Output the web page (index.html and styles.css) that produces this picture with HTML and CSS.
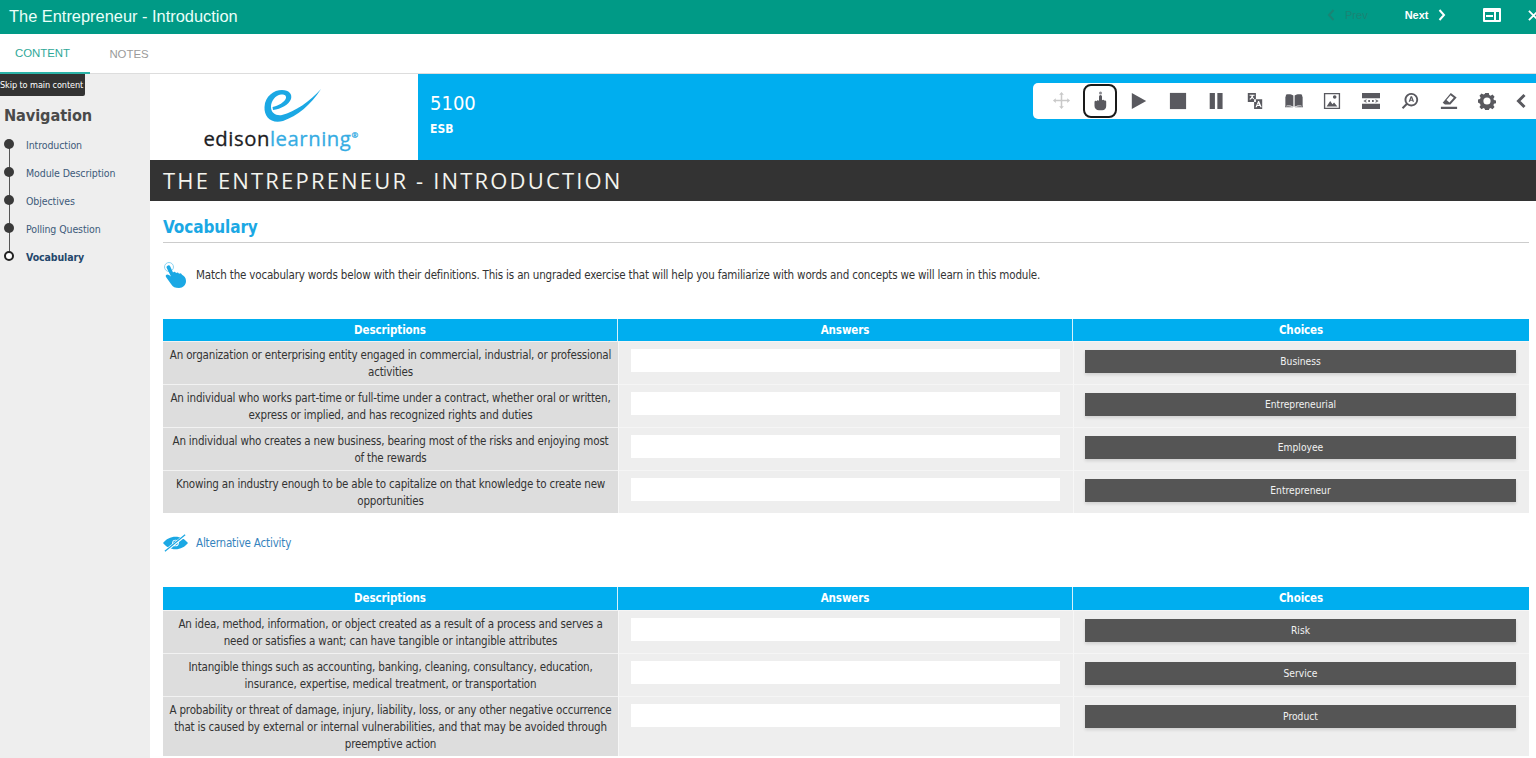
FILE: index.html
```html
<!DOCTYPE html>
<html lang="en">
<head>
<meta charset="utf-8">
<title>The Entrepreneur - Introduction</title>
<link rel="stylesheet" href="styles.css">
</head>
<body>
<header class="topbar">
  <h1 class="topbar-title">The Entrepreneur - Introduction</h1>
  <nav class="pager">
    <a class="pager-link is-disabled"><svg class="chev" viewBox="0 0 8 12"><path d="M6.500 1 2 6l4.500 5"/></svg><span class="prev-label">Prev</span></a>
    <a class="pager-link is-next"><span>Next</span><svg class="chev" viewBox="0 0 8 12"><path d="M1.500 1 6 6l-4.500 5"/></svg></a>
    <svg class="win-icon" viewBox="0 0 18 14"><path fill-rule="evenodd" d="M1 0h16a1 1 0 0 1 1 1v12a1 1 0 0 1-1 1H1a1 1 0 0 1-1-1V1a1 1 0 0 1 1-1Zm1 4v8h9V4Zm11 0v8h3V4ZM3 7h7v2H3Z"/></svg>
    <svg class="close-icon" viewBox="0 0 12 12"><path d="M1 1l10 10M11 1 1 11"/></svg>
  </nav>
</header>
<div class="tabs">
  <a class="tab is-active">CONTENT</a>
  <a class="tab">NOTES</a>
</div>
<div class="main">
  <aside class="sidebar">
    <a class="skip">Skip to main content</a>
    <h2 class="nav-title">Navigation</h2>
    <ul class="nav-list">
      <li class="nav-item">Introduction</li>
      <li class="nav-item">Module Description</li>
      <li class="nav-item">Objectives</li>
      <li class="nav-item">Polling Question</li>
      <li class="nav-item is-current">Vocabulary</li>
    </ul>
  </aside>
  <main class="content">
    <section class="hero">
      <div class="logo">
        <svg class="logo-mark" viewBox="0 0 75 42"><path fill="#1ba8e4" d="M66 4C56 20 42 31 28 36 16 39 9 32 9.500 22 10 11 19 5 27 5c7 0 10.500 4 9 9-2 5.500-10 10-18 11l-.5-3c5.500-1 12.500-5 13.500-9 .5-3-2.500-4-5-3.500-6 1-10 6.500-10 12.500 0 6 5 9 11 8C40 27 55 16 66 4Z"/></svg>
        <div class="logo-text">edison<span class="logo-accent">learning</span><sup class="logo-reg">®</sup></div>
      </div>
      <div class="hero-band">
        <div class="course">
          <div class="course-num">5100</div>
          <div class="course-sub">ESB</div>
        </div>
        <div class="toolbar">
          <svg class="tool is-muted" viewBox="0 0 20 20"><path d="M10 1 7.500 4h1.700v5.200H4V7.500L1 10l3 2.500v-1.700h5.200V16H7.500l2.500 3 2.500-3h-1.700v-5.200H16v1.700l3-2.500-3-2.500v1.700h-5.200V4h1.700Z"/></svg>
          <span class="tool-focus"><svg class="tool tool-hand" viewBox="3 0 14 20"><circle cx="10.500" cy="2" r="1.500" fill="#8a8a8f"/><path d="M9 5.500a1.500 1.500 0 0 1 3 0v3.800a1.300 1.300 0 0 1 2.200.3 1.300 1.300 0 0 1 2 1V15c0 2.500-1.500 4.300-4 4.300H9c-2.500 0-4.500-1.700-4.500-4.300v-4a1.200 1.200 0 0 1 2.200-.7A1.200 1.200 0 0 1 9 10Z"/></svg></span>
          <svg class="tool" viewBox="0 0 20 20"><path d="M2 1l16 9-16 9Z"/></svg>
          <svg class="tool" viewBox="0 0 20 20"><path d="M1 1h18v18H1Z"/></svg>
          <svg class="tool" viewBox="0 0 20 20"><path d="M3 1h5.800v18H3ZM11.500 1h5.800v18h-5.800Z"/></svg>
          <svg class="tool" viewBox="0 0 20 20"><path fill-rule="evenodd" d="M2 1h9v10H2Zm2 2v1.200h2.200C6 6 5 7 3.800 7.700l.7 1c1-.6 1.800-1.300 2.400-2.100.4.500 1 1 1.600 1.400l.5-1C8.500 6.600 8 6.100 7.500 5.500c.3-.4.500-.9.600-1.300H9.500V3ZM9 8h9v11H9Zm4.500 2-3 7H12l.6-1.500h2.800L16 17h1.500l-3-7Zm0 2.500.8 2h-1.600Z"/></svg>
          <svg class="tool" viewBox="0 0 20 20"><path d="M1 3c3-.8 6-.6 8.300 1v12.500C7 15 4 14.800 1 15.500ZM10.700 4c2.300-1.600 5.300-1.800 8.300-1v12.500c-3-.7-6-.5-8.300 1ZM0 5h.6v11.200c3-.6 6-.4 8.500.8H0ZM20 5h-.6v11.200c-3-.6-6-.4-8.500.8H20Z"/></svg>
          <svg class="tool" viewBox="0 0 20 20"><path fill-rule="evenodd" d="M1 1h18v18H1Zm1.500 1.500v15h15v-15Zm10.500 1a2 2 0 1 1 0 4 2 2 0 0 1 0-4ZM4 16l4-6 2.500 3.500 1.800-1.700L16 16Z"/></svg>
          <svg class="tool" viewBox="0 0 20 20"><path d="M0 1h20v6H0ZM0 13h20v6H0ZM5 8 1.500 10 5 12v-1.200L3.500 10 5 9.200ZM15 8v1.200l1.500.8-1.500.8V12l3.500-2ZM7 9h1.800v2H7ZM11.200 9H13v2h-1.800Z"/></svg>
          <svg class="tool" viewBox="0 0 20 20"><path fill-rule="evenodd" d="M11.500 1a7.500 7.500 0 1 1-4.600 13.400L2.500 18.800.9 17.200l4.400-4.400A7.500 7.500 0 0 1 11.500 1Zm0 2a5.500 5.500 0 1 0 0 11 5.500 5.500 0 0 0 0-11Zm-.8 1.800h1.600l2.200 6h-1.500l-.4-1.200h-2.200l-.4 1.200H8.500Zm.8 1.900-.7 1.900h1.400Z"/></svg>
          <svg class="tool" viewBox="0 0 20 20"><path fill-rule="evenodd" d="M12 1l6.500 5-7 8H5.500l-2.500-2ZM1 16.500h18v2.300H1Zm10.700-12.900L7.200 9l3.300 2.800 4.800-5.500Z"/></svg>
          <svg class="tool" viewBox="0 0 20 20"><path fill-rule="evenodd" d="M8 1h4l.5 2.400 1.500.7 2.100-1.300 2.300 2.500-1.300 2.100.6 1.500 2.300.5v3.200l-2.300.5-.6 1.500 1.300 2.100-2.300 2.500-2.100-1.300-1.500.6-.5 2.300H8l-.5-2.300-1.500-.6-2.100 1.300-2.300-2.500 1.300-2.100-.6-1.500L0 11.800V8.200l2.300-.5.6-1.500-1.300-2.100 2.300-2.500 2.100 1.300 1.500-.7ZM10 6a4 4 0 1 0 0 8 4 4 0 0 0 0-8Z"/></svg>
          <svg class="tool-back" viewBox="0 0 12 18"><path d="M9.500 3 3.500 9l6 6"/></svg>
        </div>
      </div>
    </section>
    <div class="title-bar">THE ENTREPRENEUR - INTRODUCTION</div>
    <div class="body">
      <h3 class="section-title">Vocabulary</h3>
      <div class="instruction">
        <svg class="touch-icon" viewBox="0 0 24 26"><circle cx="6" cy="5" r="4.500" fill="none" stroke="#8fd4f2" stroke-width="1"/><path fill="#1ba8e4" d="M3.500 5.500a2 2 0 0 1 3.800-1L10 10.500a2 2 0 0 1 3 .5 2 2 0 0 1 3 .8 2 2 0 0 1 3 1c2 1 4 3 4 6.200 0 4-3 7-7 7-4 0-6-1-8-4L3 15c-1-2 1-3.500 3-2l2 1.500Z"/></svg>
        <p class="instruction-text">Match the vocabulary words below with their definitions. This is an ungraded exercise that will help you familiarize with words and concepts we will learn in this module.</p>
      </div>
      <div class="match">
        <div class="match-head">Descriptions</div><div class="match-head">Answers</div><div class="match-head">Choices</div>
        <div class="desc">An organization or enterprising entity engaged in commercial, industrial, or professional activities</div><div class="cell"><div class="answer"></div></div><div class="cell"><div class="choice">Business</div></div>
        <div class="desc">An individual who works part-time or full-time under a contract, whether oral or written, express or implied, and has recognized rights and duties</div><div class="cell"><div class="answer"></div></div><div class="cell"><div class="choice">Entrepreneurial</div></div>
        <div class="desc">An individual who creates a new business, bearing most of the risks and enjoying most of the rewards</div><div class="cell"><div class="answer"></div></div><div class="cell"><div class="choice">Employee</div></div>
        <div class="desc">Knowing an industry enough to be able to capitalize on that knowledge to create new opportunities</div><div class="cell"><div class="answer"></div></div><div class="cell"><div class="choice">Entrepreneur</div></div>
      </div>
      <a class="alt-link">
        <svg class="alt-icon" viewBox="0 0 26 18"><path fill="#1ba8e4" fill-rule="evenodd" d="M0 9c3-4 8-6.500 13-6.500S23 5 26 9c-3 4-8 6.500-13 6.500S3 13 0 9Zm13-3.500a3.500 3.500 0 1 0 0 7 3.500 3.500 0 0 0 0-7Z"/><circle cx="13" cy="9" r="2.500" fill="#1ba8e4"/><path d="M3 17 23 1" stroke="#fff" stroke-width="3"/><path d="M2 17.500 23 .5" stroke="#1ba8e4" stroke-width="1.300"/></svg>
        <span>Alternative Activity</span>
      </a>
      <div class="match">
        <div class="match-head">Descriptions</div><div class="match-head">Answers</div><div class="match-head">Choices</div>
        <div class="desc">An idea, method, information, or object created as a result of a process and serves a need or satisfies a want; can have tangible or intangible attributes</div><div class="cell"><div class="answer"></div></div><div class="cell"><div class="choice">Risk</div></div>
        <div class="desc">Intangible things such as accounting, banking, cleaning, consultancy, education, insurance, expertise, medical treatment, or transportation</div><div class="cell"><div class="answer"></div></div><div class="cell"><div class="choice">Service</div></div>
        <div class="desc">A probability or threat of damage, injury, liability, loss, or any other negative occurrence that is caused by external or internal vulnerabilities, and that may be avoided through preemptive action</div><div class="cell"><div class="answer"></div></div><div class="cell"><div class="choice">Product</div></div>
      </div>
    </div>
  </main>
</div>
</body>
</html>
```

FILE: styles.css
```css
* { box-sizing: border-box; }
html, body { margin: 0; height: 758px; overflow: hidden; background: #fff; }
body { font-family: "DejaVu Sans Condensed", "DejaVu Sans", sans-serif; font-size: 11.500px; letter-spacing: -.18px; color: #333; }

.topbar { height: 34px; background: #009a86; display: flex; align-items: center; justify-content: space-between; padding-left: 9px; color: #fff; letter-spacing: 0; }
.topbar-title { margin: 0 0 2px; font: 400 16.400px "Liberation Sans", sans-serif; color: #eafff9; }
.pager { display: flex; align-items: center; font: 700 11px "Liberation Sans", sans-serif; padding-bottom: 4px; }
.pager-link { display: flex; align-items: center; color: #fff; }
.is-disabled { color: #1a8474; margin-right: 37px; }
.prev-label { margin-left: 10px; font-weight: 400; }
.is-next span { margin-right: 9px; }
.chev { width: 8px; height: 12px; fill: none; stroke: currentColor; stroke-width: 2; }
.win-icon { width: 18px; height: 14px; fill: #fff; margin-left: 37.500px; }
.close-icon { width: 11px; height: 11px; fill: none; stroke: #fff; stroke-width: 2; margin-left: 27px; margin-right: -3px; }

.tabs { height: 40px; display: flex; border-bottom: 1px solid #ddd; font: 400 11.400px "Liberation Sans", sans-serif; letter-spacing: 0; }
.tab { height: 40px; display: flex; align-items: center; justify-content: center; color: #9a9a9a; padding-bottom: 1px; }
.tab:first-child { width: 90px; padding-right: 5px; color: #2fa898; border-bottom: 2px solid #2bb3a8; }
.tab:last-child { width: 78px; }

.main { display: flex; height: 684px; }
.sidebar { position: relative; width: 150px; flex: none; background: #eee; padding: 30px 0 0 4px; }
.skip { position: absolute; left: 0; top: 0; width: 85px; height: 22px; background: #333; color: #fff; font-size: 9.100px; letter-spacing: -.1px; line-height: 23px; border-radius: 0 0 2px 0; white-space: nowrap; }
.nav-title { margin: 0 0 3px; font-size: 16.200px; letter-spacing: -.1px; line-height: 24px; font-weight: 700; color: #4a4a4a; }
.nav-list { list-style: none; margin: 0; padding: 0; position: relative; }
.nav-item { position: relative; height: 28px; line-height: 28px; padding-left: 22px; font-size: 10.500px; letter-spacing: -.1px; color: #3d5a7a; }
.nav-item::before { content: ""; position: absolute; left: 0; top: 8px; width: 10px; height: 10px; border-radius: 50%; background: #3a3a3a; z-index: 1; }
.nav-item::after { content: ""; position: absolute; left: 5px; top: 13px; width: 1px; height: 28px; background: #555; }
.nav-item.is-current { font-weight: 700; color: #24476c; }
.nav-item.is-current::before { background: #fff; border: 2px solid #222; width: 6px; height: 6px; left: 0; top: 8px; }
.nav-item.is-current::after { display: none; }

.content { flex: 1; min-width: 0; }
.hero { display: flex; height: 86px; }
.logo { width: 268px; background: #fff; display: flex; flex-direction: column; align-items: center; padding-top: 11px; }
.logo-mark { width: 75px; height: 42px; margin-left: 17px; flex: none; }
.logo-text { font: 400 20.300px/24px "Open Sans", sans-serif; color: #1c1c22; letter-spacing: .55px; margin: -1px 0 0 -6px; white-space: nowrap; -webkit-text-stroke: .3px currentColor; }
.logo-accent { color: #35ace3; }
.logo-reg { font-size: 8px; color: #35ace3; line-height: 0; }
.hero-band { flex: 1; background: #00aeef; display: flex; justify-content: space-between; padding: 9px 0 0 12px; color: #fff; }
.course { padding-top: 7px; }
.course-num { font-size: 20px; letter-spacing: 0; line-height: 26px; }
.course-sub { font-size: 12px; letter-spacing: 0; line-height: 16px; font-weight: 700; margin-top: 5px; }
.toolbar { width: 503px; height: 36px; background: #fff; border-radius: 5px 0 0 5px; display: flex; align-items: center; padding: 0 0 1px 19px; }
.tool { width: 18px; height: 18px; fill: #59595f; flex: none; margin-right: 20.700px; }
.tool.is-muted { fill: #c9c9c9; width: 19px; height: 19px; margin-right: 12px; }
.tool-focus { width: 34px; height: 34px; border: 2px solid #1a1a1a; border-radius: 8px; display: flex; align-items: center; justify-content: center; flex: none; margin-right: 13px; }
.tool-focus .tool-hand { width: 14px; height: 20px; margin: 0; }
.tool-back { width: 12px; height: 18px; fill: none; stroke: #59595f; stroke-width: 3; flex: none; margin-left: -2px; }

.title-bar { height: 41px; background: #333; color: #f4f4ee; padding-left: 13px; font: 400 22px/41px "Open Sans", sans-serif; letter-spacing: 2.170px; white-space: nowrap; }
.body { padding: 14px 7px 0 13px; }
.section-title { margin: 0; height: 28px; line-height: 24px; font-size: 17px; letter-spacing: -.1px; font-weight: 700; color: #1ba8e4; border-bottom: 1px solid #ccc; }
.instruction { display: flex; align-items: center; gap: 9px; margin-top: 19px; height: 26px; }
.touch-icon { width: 24px; height: 26px; flex: none; }
.instruction-text { margin: 0; color: #333; white-space: nowrap; }

.match { display: grid; grid-template-columns: 455px 455px 456px; margin-top: 31px; background: #fff; }
.match-head { height: 22px; line-height: 22px; background: #00aeef; color: #fff; font-weight: 700; font-size: 11.500px; letter-spacing: -.1px; text-align: center; border-right: 1px solid #d6f1fb; }
.match-head:nth-child(3) { border-right: 0; }
.desc { background: #ddd; padding: 5px 6px 3px; text-align: center; line-height: 17px; border-top: 1px solid #f2f2f2; color: #333; }
.cell { background: #eee; padding: 7px 13px 0 12px; border-top: 1px solid #f5f5f5; border-left: 1px solid #f7f7f7; }
.answer { height: 23px; background: #fff; }
.choice { height: 23px; margin-left: -1px; background: #555; color: #f2f2f2; font-size: 10.200px; letter-spacing: 0; line-height: 23px; text-align: center; box-shadow: 0 2px 3px rgba(0,0,0,.12); margin-top: 1px; }

.alt-link { display: flex; align-items: center; gap: 8px; margin-top: 21px; height: 18px; color: #3583bd; }
.alt-icon { width: 25px; height: 18px; flex: none; }
.alt-link + .match { margin-top: 35px; }
.alt-link + .match .match-head { height: 23px; }
```
